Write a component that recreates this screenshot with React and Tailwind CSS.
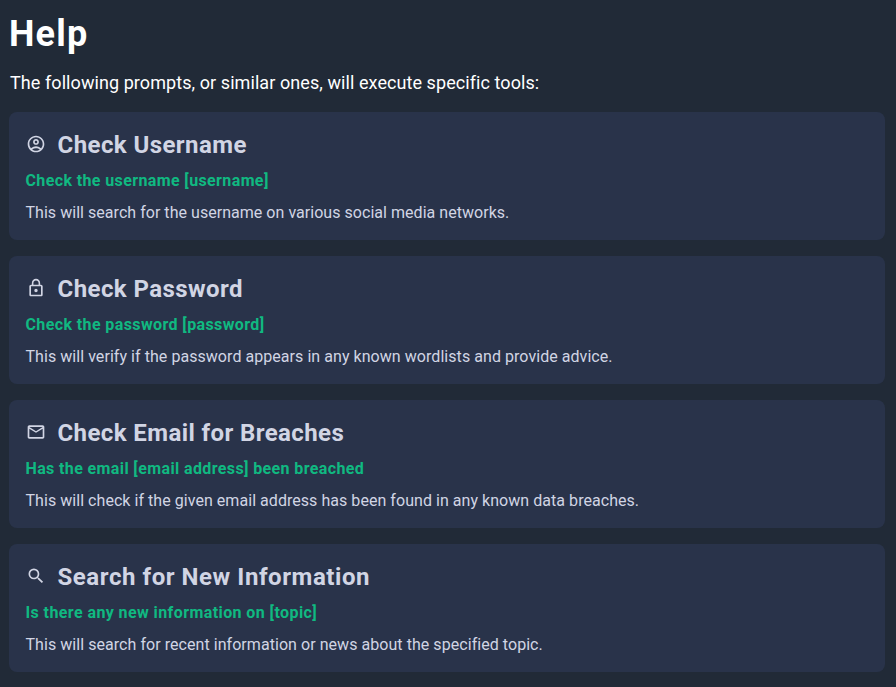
import {
  MdOutlineAccountCircle,
  MdLockOutline,
  MdOutlineMail,
  MdSearch,
} from "react-icons/md";

const tools = [
  {
    icon: MdOutlineAccountCircle,
    title: "Check Username",
    prompt: "Check the username [username]",
    text: "This will search for the username on various social media networks.",
    titleSpacing: "tracking-[0.43px]",
    promptSpacing: "tracking-[0.38px]",
    textSpacing: "tracking-[0.037px]",
  },
  {
    icon: MdLockOutline,
    title: "Check Password",
    prompt: "Check the password [password]",
    text: "This will verify if the password appears in any known wordlists and provide advice.",
    titleSpacing: "tracking-[0.43px]",
    promptSpacing: "tracking-[0.39px]",
    textSpacing: "tracking-[0.053px]",
  },
  {
    icon: MdOutlineMail,
    title: "Check Email for Breaches",
    prompt: "Has the email [email address] been breached",
    text: "This will check if the given email address has been found in any known data breaches.",
    titleSpacing: "tracking-[0.4px]",
    promptSpacing: "tracking-[0.38px]",
    textSpacing: "tracking-[0.046px]",
  },
  {
    icon: MdSearch,
    title: "Search for New Information",
    prompt: "Is there any new information on [topic]",
    text: "This will search for recent information or news about the specified topic.",
    titleSpacing: "tracking-[0.56px]",
    promptSpacing: "tracking-[0.41px]",
    textSpacing: "tracking-[0.053px]",
  },
];

function ToolCard({ tool }) {
  const Icon = tool.icon;
  return (
    <section className="h-32 rounded-lg bg-[#29334a] px-[16.5px] pt-4 text-[#d1d5e4]">
      <div className="flex h-8 items-center">
        <Icon className="mr-3 size-5 shrink-0" />
        <h2 className={`pt-0.5 text-2xl leading-8 font-bold whitespace-nowrap ${tool.titleSpacing}`}>
          {tool.title}
        </h2>
      </div>
      <p className={`mt-[9px] text-base leading-6 font-bold whitespace-nowrap text-[#10b981] ${tool.promptSpacing}`}>
        {tool.prompt}
      </p>
      <p className={`mt-2 text-base leading-6 whitespace-nowrap ${tool.textSpacing}`}>{tool.text}</p>
    </section>
  );
}

export default function App() {
  return (
    <main className="h-[687px] overflow-hidden bg-[#212a37] pr-[11px] pl-[9px] font-['Roboto',sans-serif] text-white">
      <h1 className="pt-[14px] text-4xl leading-10 font-bold tracking-[1.2px]">Help</h1>
      <p className="mt-[15px] pl-px text-lg leading-7 tracking-[0.075px] whitespace-nowrap">
        The following prompts, or similar ones, will execute specific tools:
      </p>
      <div className="mt-[15px] flex flex-col gap-4">
        {tools.map((tool) => (
          <ToolCard key={tool.title} tool={tool} />
        ))}
      </div>
    </main>
  );
}
